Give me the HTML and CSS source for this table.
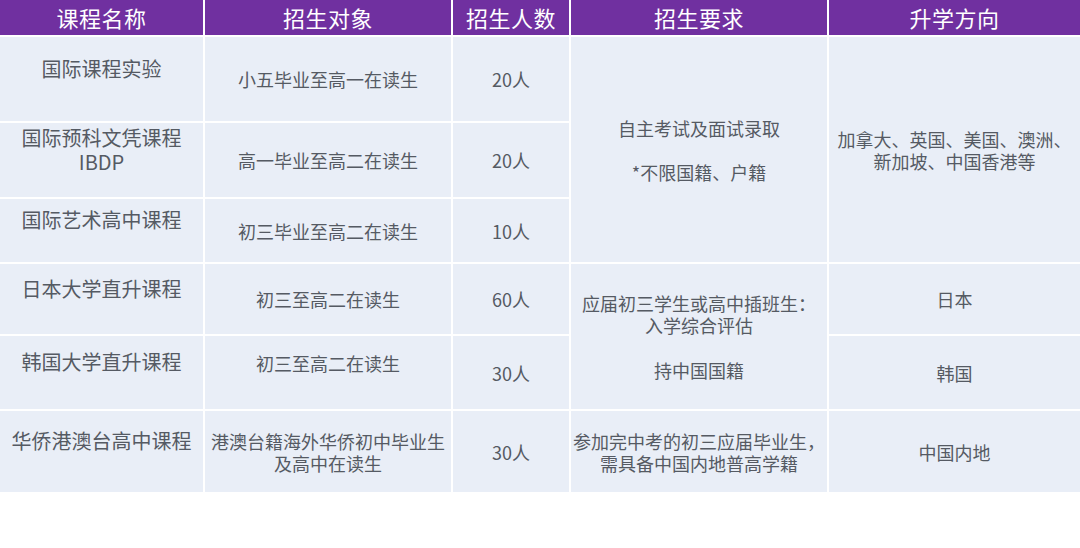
FILE: index.html
```html
<!DOCTYPE html>
<html lang="zh">
<head>
<meta charset="utf-8">
<title>课程招生表</title>
<link rel="stylesheet" href="styles.css">
</head>
<body>
<div class="table">
  <div class="th">课程名称</div>
  <div class="th">招生对象</div>
  <div class="th">招生人数</div>
  <div class="th">招生要求</div>
  <div class="th">升学方向</div>

  <div class="td name r1">国际课程实验</div>
  <div class="td r1 c2">小五毕业至高一在读生</div>
  <div class="td r1 c3">20人</div>
  <div class="td req-a c4">
    <p>自主考试及面试录取</p>
    <p class="gap">*不限国籍、户籍</p>
  </div>
  <div class="td dest-a c5">加拿大、英国、美国、澳洲、<br>新加坡、中国香港等</div>

  <div class="td name r2">国际预科文凭课程<br>IBDP</div>
  <div class="td r2 c2">高一毕业至高二在读生</div>
  <div class="td r2 c3">20人</div>

  <div class="td name r3">国际艺术高中课程</div>
  <div class="td r3 c2">初三毕业至高二在读生</div>
  <div class="td r3 c3">10人</div>

  <div class="td name r4">日本大学直升课程</div>
  <div class="td r4 c2">初三至高二在读生</div>
  <div class="td r4 c3">60人</div>
  <div class="td req-b c4">
    <p>应届初三学生或高中插班生：<br>入学综合评估</p>
    <p class="gap2">持中国国籍</p>
  </div>
  <div class="td r4 c5">日本</div>

  <div class="td name r5">韩国大学直升课程</div>
  <div class="td r5 c2 raised">初三至高二在读生</div>
  <div class="td r5 c3">30人</div>
  <div class="td r5 c5">韩国</div>

  <div class="td name r6">华侨港澳台高中课程</div>
  <div class="td r6 c2">港澳台籍海外华侨初中毕业生<br>及高中在读生</div>
  <div class="td r6 c3">30人</div>
  <div class="td r6 c4">参加完中考的初三应届毕业生，<br>需具备中国内地普高学籍</div>
  <div class="td r6 c5">中国内地</div>
</div>
</body>
</html>
```

FILE: styles.css
```css
html, body {
  margin: 0;
  padding: 0;
  background: #ffffff;
}

body {
  width: 1080px;
  height: 548px;
  overflow: hidden;
  font-family: "Noto Sans CJK SC", "Microsoft YaHei", "Noto Sans", sans-serif;
}

.table {
  display: grid;
  grid-template-columns: 203px 246px 116px 256px 251px;
  grid-template-rows: 35px 84px 74px 63px 70px 73px 81px;
  gap: 2px;
  background: #ffffff;
  width: 1080px;
}

.th {
  background: #7030a0;
  color: #ffffff;
  font-size: 22px;
  line-height: 35px;
  text-align: center;
  letter-spacing: 0.5px;
}

.td {
  background: #e9eef7;
  color: #555a63;
  font-size: 18px;
  line-height: 22px;
  display: flex;
  flex-direction: column;
  justify-content: center;
  align-items: center;
  text-align: center;
  padding: 0 2px;
  white-space: nowrap;
}

.td p {
  margin: 0;
}

.td p.gap {
  margin-top: 22px;
}

.td p.gap2 {
  margin-top: 23px;
}

.name {
  grid-column: 1;
  font-size: 20px;
  line-height: 24px;
  padding-bottom: 21px;
}

.raised {
  padding-bottom: 20px;
}

.r1 { grid-row: 2; }
.r2 { grid-row: 3; }
.r3 { grid-row: 4; }
.r4 { grid-row: 5; }
.r5 { grid-row: 6; }
.r6 { grid-row: 7; }

.c2 { grid-column: 2; }
.c3 { grid-column: 3; }
.c4 { grid-column: 4; }
.c5 { grid-column: 5; }

.req-a { grid-row: 2 / span 3; }
.dest-a { grid-row: 2 / span 3; }
.req-b { grid-row: 5 / span 2; }
```
